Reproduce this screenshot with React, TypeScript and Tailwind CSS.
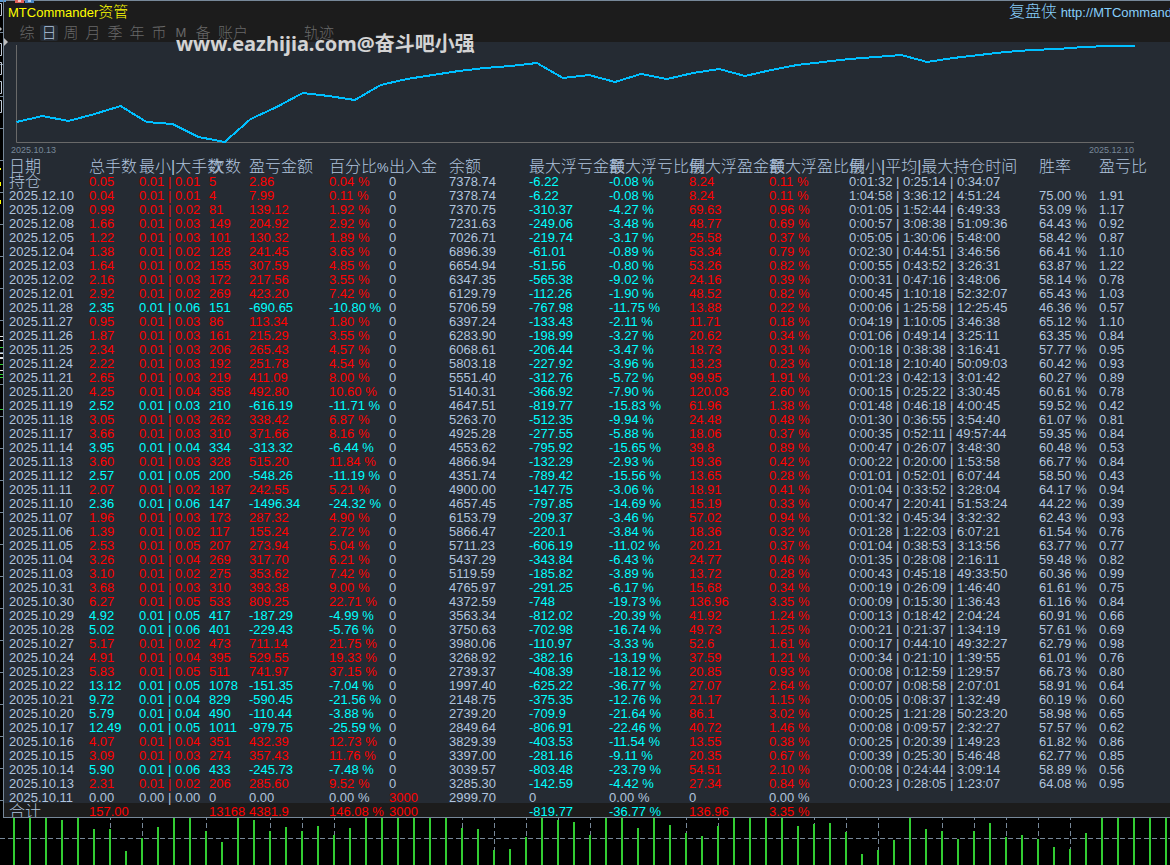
import React, { useState } from 'react';
import clsx from 'clsx';

const tabs = ['综', '日', '周', '月', '季', '年', '币', 'M', '备'];

const columns = [
  { label: '日期', width: 'w-[80px]' },
  { label: '总手数', width: 'w-[50px]' },
  { label: '最小|大手数', width: 'w-[70px]' },
  { label: '次数', width: 'w-[40px]' },
  { label: '盈亏金额', width: 'w-[80px]' },
  { label: '百分比', unit: '%', width: 'w-[60px]' },
  { label: '出入金', width: 'w-[60px]' },
  { label: '余额', width: 'w-[80px]' },
  { label: '最大浮亏金额', width: 'w-[80px]' },
  { label: '最大浮亏比例', width: 'w-[80px]' },
  { label: '最大浮盈金额', width: 'w-[80px]' },
  { label: '最大浮盈比例', width: 'w-[80px]' },
  { label: '最小|平均|最大持仓时间', width: 'w-[190px]' },
  { label: '胜率', width: 'w-[60px]' },
  { label: '盈亏比', width: 'w-auto' },
];

// date, lots, max lot, orders, profit, profit %, balance, max loss, max loss %, max gain, max gain %, hold times, win rate, ratio
const data = `
持仓,0.05,0.01,5,2.86,0.04,7378.74,-6.22,-0.08,8.24,0.11,0:01:32 | 0:25:14 | 0:34:07,,
2025.12.10,0.04,0.01,4,7.99,0.11,7378.74,-6.22,-0.08,8.24,0.11,1:04:58 | 3:36:12 | 4:51:24,75.00,1.91
2025.12.09,0.99,0.02,81,139.12,1.92,7370.75,-310.37,-4.27,69.63,0.96,0:01:05 | 1:52:44 | 6:49:33,53.09,1.17
2025.12.08,1.66,0.03,149,204.92,2.92,7231.63,-249.06,-3.48,48.77,0.69,0:00:57 | 3:08:38 | 51:09:36,64.43,0.92
2025.12.05,1.22,0.03,101,130.32,1.89,7026.71,-219.74,-3.17,25.58,0.37,0:05:05 | 1:30:06 | 5:48:00,58.42,0.87
2025.12.04,1.38,0.02,128,241.45,3.63,6896.39,-61.01,-0.89,53.34,0.79,0:02:30 | 0:44:51 | 3:46:56,66.41,1.10
2025.12.03,1.64,0.02,155,307.59,4.85,6654.94,-51.56,-0.80,53.26,0.82,0:00:55 | 0:43:52 | 3:26:31,63.87,1.22
2025.12.02,2.16,0.03,172,217.56,3.55,6347.35,-565.38,-9.02,24.16,0.39,0:00:31 | 0:47:16 | 3:48:06,58.14,0.78
2025.12.01,2.92,0.02,269,423.20,7.42,6129.79,-112.26,-1.90,48.52,0.82,0:00:45 | 1:10:18 | 52:32:07,65.43,1.03
2025.11.28,2.35,0.06,151,-690.65,-10.80,5706.59,-767.98,-11.75,13.88,0.22,0:00:06 | 1:25:58 | 12:25:45,46.36,0.57
2025.11.27,0.95,0.03,86,113.34,1.80,6397.24,-133.43,-2.11,11.71,0.18,0:04:19 | 1:10:05 | 3:46:38,65.12,1.10
2025.11.26,1.87,0.03,161,215.29,3.55,6283.90,-198.99,-3.27,20.62,0.34,0:01:06 | 0:49:14 | 3:25:11,63.35,0.84
2025.11.25,2.34,0.03,206,265.43,4.57,6068.61,-206.44,-3.47,18.73,0.31,0:00:18 | 0:38:38 | 3:16:41,57.77,0.95
2025.11.24,2.22,0.03,192,251.78,4.54,5803.18,-227.92,-3.96,13.23,0.23,0:01:18 | 2:10:40 | 50:09:03,60.42,0.93
2025.11.21,2.65,0.03,219,411.09,8.00,5551.40,-312.76,-5.72,99.95,1.91,0:01:23 | 0:42:13 | 3:01:42,60.27,0.89
2025.11.20,4.25,0.04,358,492.80,10.60,5140.31,-366.92,-7.90,120.03,2.60,0:00:15 | 0:25:22 | 3:30:45,60.61,0.78
2025.11.19,2.52,0.03,210,-616.19,-11.71,4647.51,-819.77,-15.83,61.96,1.38,0:01:48 | 0:46:18 | 4:00:45,59.52,0.42
2025.11.18,3.05,0.03,262,338.42,6.87,5263.70,-512.35,-9.94,24.48,0.48,0:01:30 | 0:36:55 | 3:54:40,61.07,0.81
2025.11.17,3.66,0.03,310,371.66,8.16,4925.28,-277.55,-5.88,18.06,0.37,0:00:35 | 0:52:11 | 49:57:44,59.35,0.84
2025.11.14,3.95,0.04,334,-313.32,-6.44,4553.62,-795.92,-15.65,39.8,0.89,0:00:47 | 0:26:07 | 3:48:30,60.48,0.53
2025.11.13,3.60,0.03,328,515.20,11.84,4866.94,-132.29,-2.93,19.36,0.42,0:00:22 | 0:20:00 | 1:53:58,66.77,0.84
2025.11.12,2.57,0.05,200,-548.26,-11.19,4351.74,-789.42,-15.56,13.65,0.28,0:01:01 | 0:52:01 | 6:07:44,58.50,0.43
2025.11.11,2.07,0.02,187,242.55,5.21,4900.00,-147.75,-3.06,18.91,0.41,0:01:04 | 0:33:52 | 3:28:04,64.17,0.94
2025.11.10,2.36,0.06,147,-1496.34,-24.32,4657.45,-797.85,-14.69,15.19,0.33,0:00:47 | 2:20:41 | 51:53:24,44.22,0.39
2025.11.07,1.96,0.03,173,287.32,4.90,6153.79,-209.37,-3.46,57.02,0.94,0:01:32 | 0:45:34 | 3:32:32,62.43,0.93
2025.11.06,1.39,0.02,117,155.24,2.72,5866.47,-220.1,-3.84,18.36,0.32,0:01:28 | 1:22:03 | 6:07:21,61.54,0.76
2025.11.05,2.53,0.05,207,273.94,5.04,5711.23,-606.19,-11.02,20.21,0.37,0:01:04 | 0:38:53 | 3:13:56,63.77,0.77
2025.11.04,3.26,0.04,269,317.70,6.21,5437.29,-343.84,-6.43,24.77,0.46,0:01:35 | 0:28:08 | 2:16:11,59.48,0.82
2025.11.03,3.10,0.02,275,353.62,7.42,5119.59,-185.82,-3.89,13.72,0.28,0:00:43 | 0:45:18 | 49:33:50,60.36,0.99
2025.10.31,3.68,0.03,310,393.38,9.00,4765.97,-291.25,-6.17,15.68,0.34,0:00:19 | 0:26:09 | 1:46:40,61.61,0.75
2025.10.30,6.27,0.05,533,809.25,22.71,4372.59,-748,-19.73,136.96,3.35,0:00:09 | 0:15:30 | 1:36:43,61.16,0.84
2025.10.29,4.92,0.05,417,-187.29,-4.99,3563.34,-812.02,-20.39,41.92,1.24,0:00:13 | 0:18:42 | 2:04:24,60.91,0.66
2025.10.28,5.02,0.06,401,-229.43,-5.76,3750.63,-702.98,-16.74,49.73,1.25,0:00:21 | 0:21:37 | 1:34:19,57.61,0.69
2025.10.27,5.17,0.02,473,711.14,21.75,3980.06,-110.97,-3.33,52.6,1.61,0:00:17 | 0:44:10 | 49:32:27,62.79,0.98
2025.10.24,4.91,0.04,395,529.55,19.33,3268.92,-382.16,-13.19,37.59,1.21,0:00:34 | 0:21:10 | 1:39:55,61.01,0.76
2025.10.23,5.83,0.05,511,741.97,37.15,2739.37,-408.39,-18.12,20.85,0.93,0:00:08 | 0:12:59 | 1:29:57,66.73,0.80
2025.10.22,13.12,0.05,1078,-151.35,-7.04,1997.40,-625.22,-36.77,27.07,2.64,0:00:07 | 0:08:58 | 2:07:01,58.91,0.64
2025.10.21,9.72,0.04,829,-590.45,-21.56,2148.75,-375.35,-12.76,21.17,1.15,0:00:05 | 0:08:37 | 1:32:49,60.19,0.60
2025.10.20,5.79,0.04,490,-110.44,-3.88,2739.20,-709.9,-21.64,86.1,3.02,0:00:25 | 1:21:28 | 50:23:20,58.98,0.65
2025.10.17,12.49,0.05,1011,-979.75,-25.59,2849.64,-806.91,-22.46,40.72,1.46,0:00:08 | 0:09:57 | 2:32:27,57.57,0.62
2025.10.16,4.07,0.04,351,432.39,12.73,3829.39,-403.53,-11.54,13.55,0.38,0:00:25 | 0:20:39 | 1:49:23,61.82,0.86
2025.10.15,3.09,0.03,274,357.43,11.76,3397.00,-281.16,-9.11,20.35,0.67,0:00:39 | 0:25:30 | 5:46:48,62.77,0.85
2025.10.14,5.90,0.06,433,-245.73,-7.48,3039.57,-803.48,-23.79,54.51,2.10,0:00:08 | 0:24:44 | 3:09:14,58.89,0.56
2025.10.13,2.31,0.02,206,285.60,9.52,3285.30,-142.59,-4.42,27.34,0.84,0:00:23 | 0:28:05 | 1:23:07,64.08,0.95
`;

interface CellData {
  text: string;
  tone?: string;
}

const UP = 'text-[#f00]';
const DOWN = 'text-[#0ff]';

const rows: CellData[][] = data
  .trim()
  .split('\n')
  .map((line) => {
    const [date, lots, maxLot, count, profit, pct, balance, loss, lossPct, gain, gainPct, hold, win, ratio] = line.split(',');
    const tone = profit.startsWith('-') ? DOWN : UP;
    return [
      { text: date },
      { text: lots, tone },
      { text: `0.01 | ${maxLot}`, tone },
      { text: count, tone },
      { text: profit, tone },
      { text: `${pct} %`, tone },
      { text: '0' },
      { text: balance },
      { text: loss, tone: DOWN },
      { text: `${lossPct} %`, tone: DOWN },
      { text: gain, tone: UP },
      { text: `${gainPct} %`, tone: UP },
      { text: hold },
      { text: win ? `${win} %` : '' },
      { text: ratio },
    ];
  });

// opening deposit, nothing traded on that day
rows.push([
  { text: '2025.10.11' },
  { text: '0.00' },
  { text: '0.00 | 0.00' },
  { text: '0' },
  { text: '0.00' },
  { text: '0.00 %' },
  { text: '3000', tone: UP },
  { text: '2999.70' },
  { text: '0' },
  { text: '0.00 %' },
  { text: '0' },
  { text: '0.00 %' },
  { text: '' },
  { text: '' },
  { text: '' },
]);

const totals: CellData[] = [
  { text: '合计' },
  { text: '157.00', tone: UP },
  { text: '' },
  { text: '13168', tone: UP },
  { text: '4381.9', tone: UP },
  { text: '146.08 %', tone: UP },
  { text: '3000', tone: UP },
  { text: '' },
  { text: '-819.77', tone: DOWN },
  { text: '-36.77 %', tone: DOWN },
  { text: '136.96', tone: UP },
  { text: '3.35 %', tone: UP },
  { text: '' },
  { text: '' },
  { text: '' },
];

const equity = [
  122, 116, 121, 114, 106, 122, 124, 137, 142, 119, 107, 93, 96, 100, 85, 79, 75, 71, 68, 66, 63, 78,
  75, 82, 74, 79, 73, 69, 76, 70, 65, 62, 59, 57, 55, 62, 58, 55, 52, 50, 49, 47, 46, 46,
];

const volumes = [
  47, 47, 47, 45, 47, 36, 36, 14, 27, 38, 47, 47, 34, 23, 47, 45, 34, 38, 34, 39, 30, 37, 47, 47, 47,
  47, 47, 47, 37, 36, 15, 16, 28, 47, 45, 43, 30, 47, 47, 37, 47, 40, 32, 29, 39, 47, 47, 47, 47, 39,
  41, 42, 33, 11, 15, 25, 47, 36, 34, 26, 34, 42, 28, 30, 26, 18, 16, 32, 47, 47, 47, 47, 47,
];

function EquityChart() {
  const points = equity.map((y, i) => `${12.5 + i * 26.02},${y - 42}`).join(' ');
  return (
    <div className="bg-[#252b33]">
      <svg className="block w-full h-[102px]" viewBox="0 0 1166 102" preserveAspectRatio="none">
        <path d="M12.5 3V100.5H1130" fill="none" stroke="#696969" vectorEffect="non-scaling-stroke" />
        <polyline
          points={points}
          fill="none"
          stroke="#00bfff"
          strokeWidth="2"
          shapeRendering="crispEdges"
          vectorEffect="non-scaling-stroke"
        />
      </svg>
      <div className="flex justify-between pl-[7px] pr-9 h-[14px] leading-[12px] text-[9px] text-[#778899]">
        <span>2025.10.13</span>
        <span>2025.12.10</span>
      </div>
    </div>
  );
}

function VolumeChart() {
  return (
    <svg
      className="block w-full h-[47px] bg-black"
      viewBox="0 0 1170 47"
      preserveAspectRatio="none"
      shapeRendering="crispEdges"
    >
      <path d="M0 20.5H1170" stroke="#778899" strokeDasharray="5 3" />
      {volumes.map((_, i) =>
        i % 2 === 0 ? <path key={i} d={`M${14.5 + i * 16} 0V47`} stroke="#778899" strokeDasharray="5 3" strokeDashoffset="3" /> : null
      )}
      {volumes.map((v, i) => (
        <rect key={i} x={13 + i * 16} y={47 - v} width="2" height={v} fill="#32cd32" />
      ))}
    </svg>
  );
}

// sliver of the terminal window that shows beside the panel
function WindowEdge() {
  const ticks = Array.from({ length: 25 }, (_, i) => 32 + i * 32);
  return (
    <svg className="block w-[3px] h-[818px] shrink-0" viewBox="0 0 3 818">
      {ticks.map((y) => (
        <rect key={y} x="0" y={y} width="3" height="1" fill="#778899" />
      ))}
      <path d="M0 0H3V2H0Z" fill="#5b9bd5" />
      {[3, 43, 62, 81, 100].map((y) => (
        <path key={y} d={`M0 ${y + 0.5}H1.5V${y + 12.5}H0`} fill="none" stroke="#c0cad8" />
      ))}
      <path d="M0 27L2 29L0 31Z" fill="#c0c0c0" />
      <path d="M0 168h1v2h-1zM0 182h1v4h-1zM0 200h1v4h-1z" fill="#ff0" />
      <path d="M0 336h3v1h-3zM0 340h3v1h-3zM0 353h3v1h-3zM0 357h3v2h-3zM0 370h3v1h-3z" fill="#e5e5e5" />
      <path d="M0 347h3v1h-3zM0 364h3v1h-3zM0 374h3v1h-3zM0 377h3v1h-3zM0 409h3v1h-3z" fill="#32cd32" />
    </svg>
  );
}

function Cell({ text, tone }: CellData) {
  const cjk = /[\u4e00-\u9fff]/.test(text);
  return (
    <td className={clsx('p-0 pt-[2px]', tone)}>
      <div className={clsx('h-3 leading-[14px]', cjk ? 'text-[16px] font-light' : 'text-[13px]')}>{text}</div>
    </td>
  );
}

export default function App() {
  const [active, setActive] = useState('日');

  const tabClass = (name: string) =>
    clsx(
      'h-4 leading-4 overflow-hidden rounded-[2px] text-center font-light',
      name === 'M' ? 'text-[13px]' : 'text-[15px]',
      active === name ? 'bg-[#252b33] text-[#b0c4de]' : 'text-[#696969]'
    );

  return (
    <div className="bg-black overflow-hidden font-['Liberation_Sans','Noto_Sans_CJK_SC',sans-serif] text-[#b0c4de] whitespace-nowrap">
      <div className="flex">
        <WindowEdge />
        <div className="relative flex-1 min-w-0 border-t border-l border-b border-[#778899]">
          <svg className="absolute -top-px left-0 w-8 h-[3px]" viewBox="0 0 32 3">
            <rect x="0" width="2" height="2" fill="#5b9bd5" />
            <rect x="11" width="9" height="3" fill="#e0605a" />
            <rect x="14" width="3" height="2" fill="#f5c4c0" />
            <rect x="21" width="9" height="3" fill="#4a86c5" />
            <rect x="24" width="3" height="2" fill="#a8cff0" />
          </svg>
          <svg className="absolute top-[37px] left-0 w-1 h-2" viewBox="0 0 4 8">
            <path d="M0 0L4 4L0 8Z" fill="#c0c0c0" />
          </svg>

          <header className="bg-[#1c1c1c] h-[41px]">
            <div className="flex justify-between h-6 leading-[22px] pl-1 text-[13px] font-light">
              <h1 className="text-[#ff0]">
                MTCommander<span className="text-[15px]">资管</span>
              </h1>
              <a href="#" className="w-[161px] overflow-hidden text-[#87cefa]">
                <span className="text-[16px]">复盘侠</span> http://MTCommand
              </a>
            </div>
            <nav className="flex gap-1 pl-[14px]">
              {tabs.map((name) => (
                <button key={name} onClick={() => setActive(name)} className={clsx('w-[18px]', tabClass(name))}>
                  {name}
                </button>
              ))}
              <button onClick={() => setActive('账户')} className={clsx('w-[34px]', tabClass('账户'))}>
                账户
              </button>
              <button onClick={() => setActive('轨迹')} className={clsx('w-[34px] ml-12', tabClass('轨迹'))}>
                轨迹
              </button>
            </nav>
          </header>

          <EquityChart />

          <div className="bg-[#252b33] overflow-hidden">
            <table className="w-full table-fixed border-collapse text-left">
              <thead>
                <tr>
                  <th className="w-[5px] p-0" />
                  {columns.map((c) => (
                    <th key={c.label} className={clsx('p-0 font-light text-[16px]', c.width)}>
                      <div className="h-[15px] leading-[17px]">
                        {c.label}
                        {c.unit && <span className="text-[13px]">{c.unit}</span>}
                      </div>
                    </th>
                  ))}
                </tr>
              </thead>
              <tbody>
                {rows.map((row, i) => (
                  <tr key={i}>
                    <td className="p-0" />
                    {row.map((cell, j) => (
                      <Cell key={j} {...cell} />
                    ))}
                  </tr>
                ))}
              </tbody>
              <tfoot className="bg-[#1c1c1c]">
                <tr>
                  <td className="p-0" />
                  {totals.map((cell, j) => (
                    <Cell key={j} {...cell} />
                  ))}
                </tr>
              </tfoot>
            </table>
          </div>

          <div className="absolute top-[29px] left-[172px] text-[20px] leading-7 font-bold text-[#d3d3d3] pointer-events-none font-['Noto_Sans','Noto_Sans_CJK_SC',sans-serif]">
            www.eazhijia.com@奋斗吧小强
          </div>
        </div>
      </div>
      <VolumeChart />
    </div>
  );
}
